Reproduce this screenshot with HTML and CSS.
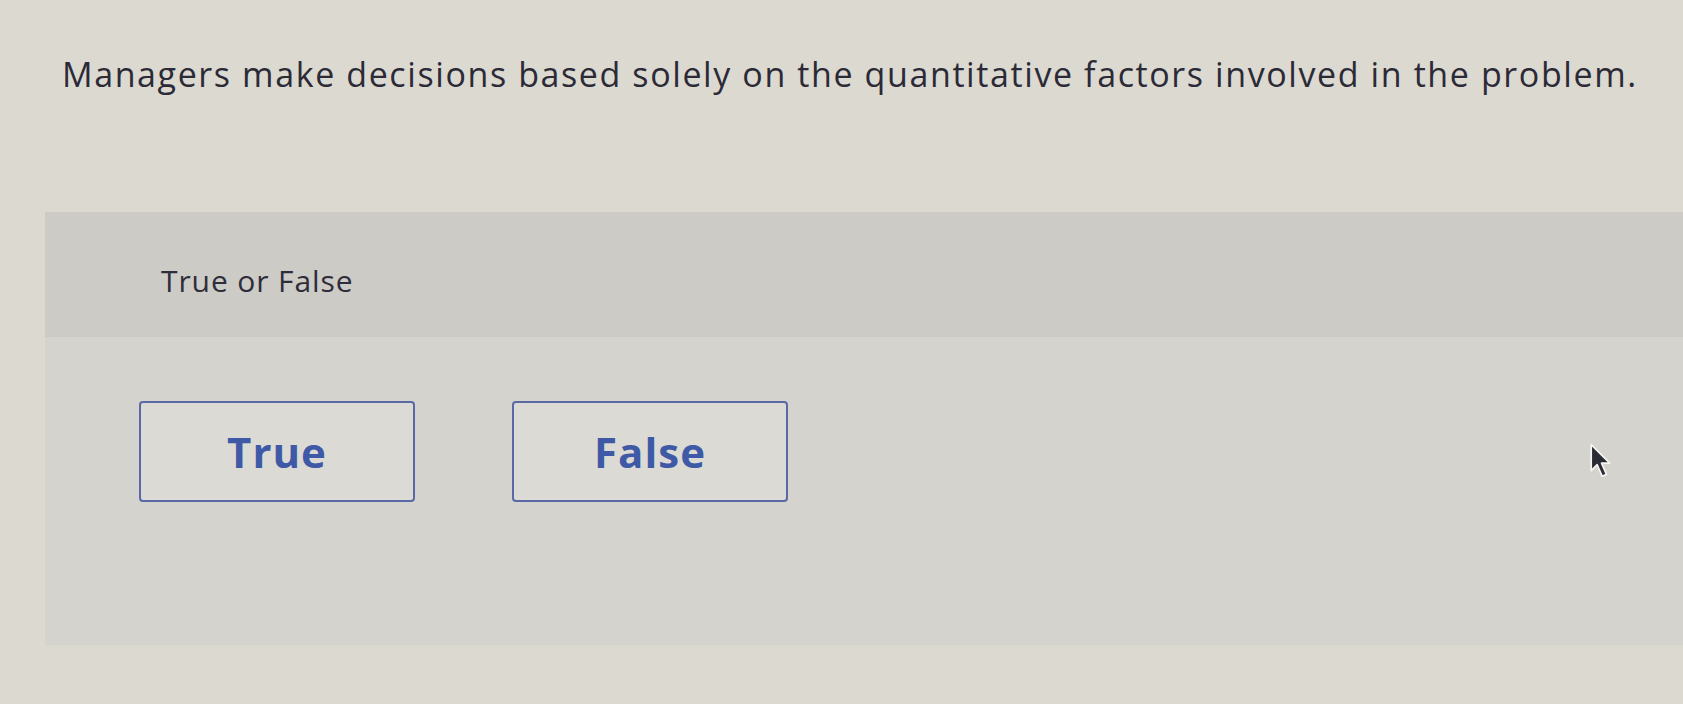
FILE: index.html
```html
<!DOCTYPE html>
<html lang="en">
<head>
    <meta charset="UTF-8">
    <meta name="viewport" content="width=device-width, initial-scale=1.0">
    <title>Question - True or False</title>
    <link rel="stylesheet" href="styles.css">
</head>
<body>
    <div class="question">
        <p class="prompt">Managers make decisions based solely on the quantitative factors involved in the problem.</p>
    </div>
    <div class="answer-panel">
        <div class="answer-header">
            <span class="answer-type">True or False</span>
        </div>
        <div class="answer-options">
            <button class="option-btn">True</button>
            <button class="option-btn">False</button>
        </div>
    </div>
    <svg class="pointer" width="24" height="38" viewBox="0 0 22 34">
        <path d="M2 1 L2 25 L7.5 19.5 L12 30 L16 28.3 L11.5 18 L19 18 Z" fill="#2b2b33" stroke="#f4f4f2" stroke-width="1.6" stroke-linejoin="round"/>
    </svg>
</body>
</html>
```

FILE: styles.css
```css
body {
    font-family: "Open Sans", Lato, Arial, sans-serif;
    background: #dcd9d1;
    margin: 0;
    height: 704px;
    overflow: hidden;
    position: relative;
}

.question {
    padding: 52px 0 0 62px;
    height: 160px;
}

.prompt {
    margin: 0;
    font-size: 34px;
    line-height: 44px;
    color: #2b2a36;
    letter-spacing: 1.6px;
}

.answer-panel {
    margin-left: 45px;
    background: #d5d3cd;
    height: 433px;
}

.answer-header {
    background: #cdcbc5;
    height: 125px;
    padding-left: 116px;
    display: flex;
    align-items: center;
}

.answer-type {
    font-size: 30px;
    color: #2e2d3b;
    margin-top: 12px;
    letter-spacing: 0.9px;
}

.answer-options {
    display: flex;
    gap: 97px;
    padding: 64px 0 0 94px;
}

.option-btn {
    width: 276px;
    height: 101px;
    background: #dcdad4;
    border: 2px solid #5a68a6;
    border-radius: 4px;
    font-family: inherit;
    font-size: 42px;
    font-weight: 700;
    letter-spacing: 1px;
    color: #3e5aa6;
    cursor: pointer;
}

.pointer {
    position: absolute;
    left: 1589px;
    top: 443px;
}
```
